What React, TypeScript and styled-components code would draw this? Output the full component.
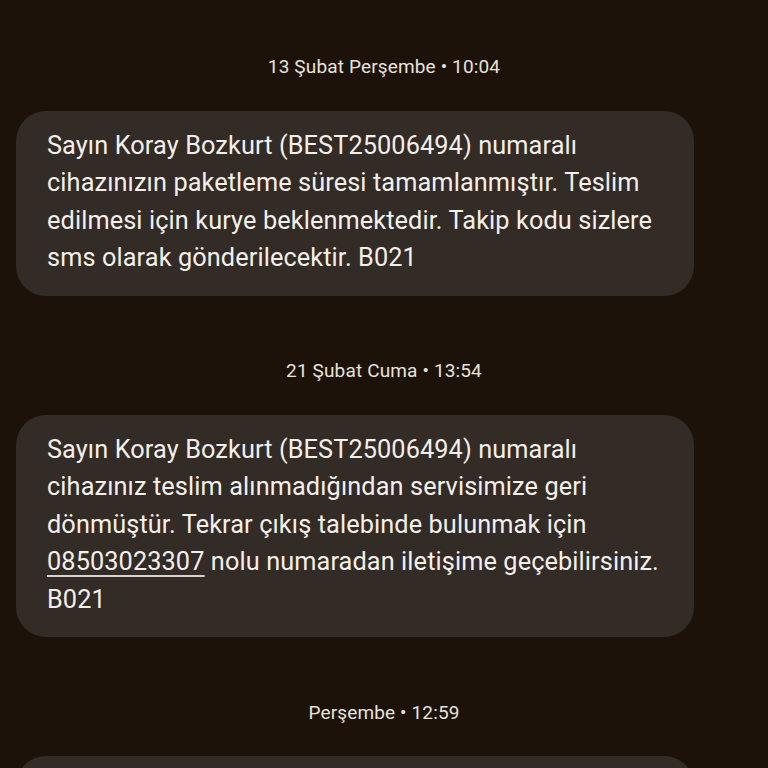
import React from 'react'
import styled, { createGlobalStyle } from 'styled-components'

const GlobalStyle = createGlobalStyle`
  html, body {
    margin: 0;
    padding: 0;
    background: #1c1209;
  }
  body {
    font-family: Roboto, "Noto Sans", sans-serif;
    -webkit-font-smoothing: antialiased;
  }
`

const Thread = styled.div`
  height: 768px;
  overflow: hidden;
  padding: 0 74px 0 16px;
  display: flex;
  flex-direction: column;
`

const Group = styled.section`
  display: flex;
  flex-direction: column;
`

const Stamp = styled.div<{ first?: boolean }>`
  margin: ${(p) => (p.first ? '56px' : '64.5px')} 0 32.5px;
  height: 22px;
  line-height: 22px;
  text-align: center;
  padding-left: 58px;
  color: #e8e2dc;
  font-size: 19px;
  letter-spacing: 0.15px;
`

const Bubble = styled.div`
  background-color: #332b26;
  border-radius: 30px;
  padding: 16px 31px 19px;
  min-height: 150px;
  color: #f3efeb;
  font-size: 25.3px;
  line-height: 37.5px;
  letter-spacing: 0.1px;
`

const Line = styled.div`
  white-space: nowrap;
`

const PhoneLink = styled.span`
  text-decoration: underline;
  text-decoration-color: #d9d3ce;
  text-decoration-thickness: 2px;
  text-underline-offset: 5px;
`

type Message = {
  stamp: string
  lines: React.ReactNode[]
}

const messages: Message[] = [
  {
    stamp: '13 Şubat Perşembe • 10:04',
    lines: [
      'Sayın Koray Bozkurt (BEST25006494) numaralı',
      'cihazınızın paketleme süresi tamamlanmıştır. Teslim',
      'edilmesi için kurye beklenmektedir. Takip kodu sizlere',
      'sms olarak gönderilecektir. B021'
    ]
  },
  {
    stamp: '21 Şubat Cuma • 13:54',
    lines: [
      'Sayın Koray Bozkurt (BEST25006494) numaralı',
      'cihazınız teslim alınmadığından servisimize geri',
      'dönmüştür. Tekrar çıkış talebinde bulunmak için',
      <>
        <PhoneLink>08503023307</PhoneLink> nolu numaradan iletişime geçebilirsiniz.
      </>,
      'B021'
    ]
  },
  {
    stamp: 'Perşembe • 12:59',
    lines: []
  }
]

export default function App (): JSX.Element {
  return (
    <>
      <GlobalStyle />
      <Thread>
        {messages.map((m, i) => (
          <Group key={i}>
            <Stamp first={i === 0}>{m.stamp}</Stamp>
            <Bubble>
              {m.lines.map((line, j) => (
                <Line key={j}>{line}</Line>
              ))}
            </Bubble>
          </Group>
        ))}
      </Thread>
    </>
  )
}
